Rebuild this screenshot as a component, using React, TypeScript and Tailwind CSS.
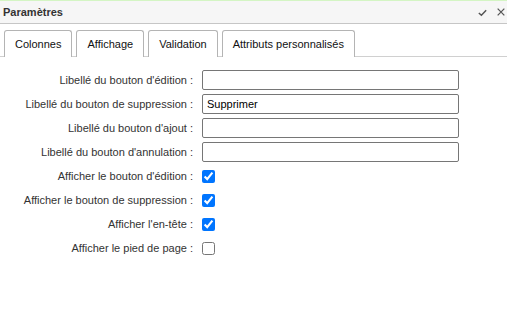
import React from "react";

const textRows = [
  { label: "Libellé du bouton d'édition :", value: "" },
  { label: "Libellé du bouton de suppression :", value: "Supprimer" },
  { label: "Libellé du bouton d'ajout :", value: "" },
  { label: "Libellé du bouton d'annulation :", value: "" },
];

const checkRows = [
  { label: "Afficher le bouton d'édition :", checked: true },
  { label: "Afficher le bouton de suppression :", checked: true },
  { label: "Afficher l'en-tête :", checked: true },
  { label: "Afficher le pied de page :", checked: false },
];

const tabs = ["Colonnes", "Affichage", "Validation", "Attributs personnalisés"];

export default function App() {
  return (
    <div
      className="w-[507px] h-[311px] bg-white overflow-hidden border-t border-[#d4f5c4]"
      style={{ fontFamily: '"Liberation Sans", Arial, sans-serif' }}
    >
      <div className="h-[23px] bg-[#f6f6f6] border-b border-[#c6c6c6] flex items-center justify-between pl-[3px]">
        <span className="text-[11px] font-bold text-[#333] leading-none">Paramètres</span>
        <div className="flex items-center gap-[8px] text-[#555] mr-[1px]">
          <svg width="11" height="11" viewBox="0 0 12 12">
            <path d="M2 6.5 L4.8 9 L10 3.5" fill="none" stroke="#555" strokeWidth="1.6" />
          </svg>
          <svg width="10" height="10" viewBox="0 0 12 12">
            <path d="M2 2 L10 10 M10 2 L2 10" fill="none" stroke="#555" strokeWidth="1.5" />
          </svg>
        </div>
      </div>

      <div className="mt-[6px] flex gap-[4px] pl-[4px] border-b border-[#d0d0d0] h-[27px]">
        {tabs.map((t) => (
          <div
            key={t}
            className="h-[27px] px-[10px] flex items-center border border-b-0 border-[#b4b4b4] rounded-t-[3px] text-[11px] text-[#111] bg-white"
          >
            {t}
          </div>
        ))}
      </div>

      <div className="mt-[13px] flex flex-col gap-[4px]">
        {textRows.map((r) => (
          <div key={r.label} className="flex items-center h-[20px]">
            <div className="w-[193px] text-right text-[11px] text-[#333]">{r.label}</div>
            <input
              type="text"
              defaultValue={r.value}
              className="ml-[9px] w-[257px] h-[20px] border border-[#767676] rounded-[2px] px-[4px] text-[11px] text-black outline-none"
              style={{ fontFamily: '"Liberation Sans", Arial, sans-serif' }}
            />
          </div>
        ))}
        {checkRows.map((r) => (
          <div key={r.label} className="flex items-center h-[20px]">
            <div className="w-[193px] text-right text-[11px] text-[#333]">{r.label}</div>
            <input
              type="checkbox"
              defaultChecked={r.checked}
              className="ml-[9px] w-[13px] h-[13px] m-0 accent-[#0075ff]"
            />
          </div>
        ))}
      </div>
    </div>
  );
}
